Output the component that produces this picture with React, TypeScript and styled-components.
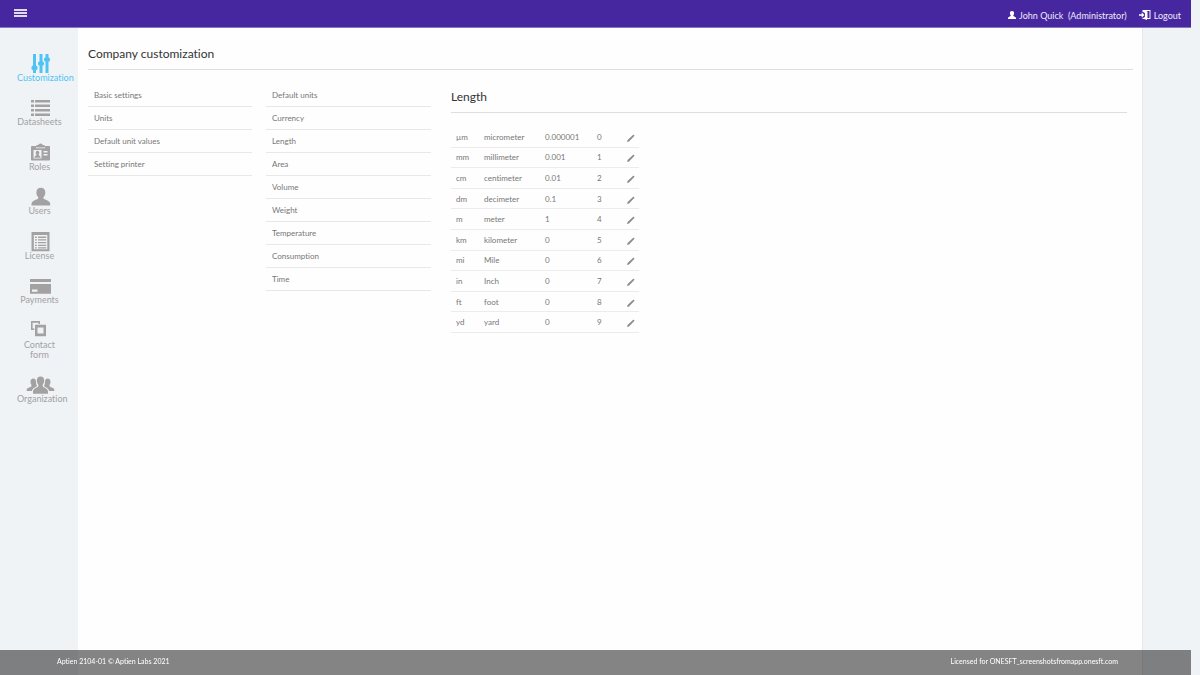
import React from 'react';
import styled, { createGlobalStyle } from 'styled-components';

const GlobalStyle = createGlobalStyle`
  *, *::before, *::after { box-sizing: border-box; }
  body {
    margin: 0;
    background: #eff3f6;
    color: #777;
    font-family: Lato, "Liberation Sans", sans-serif;
    font-size: 8px;
    font-variant-ligatures: none;
  }
  a { color: inherit; text-decoration: none; }
  button { border: 0; padding: 0; background: none; color: inherit; font: inherit; cursor: pointer; }
  ul { list-style: none; margin: 0; padding: 0; }
  svg { display: block; flex: none; }
`;

const Page = styled.div`
  min-height: 100vh;
  padding-right: 9px;
  display: flex;
  flex-direction: column;
`;

const TopBar = styled.header`
  height: 28px;
  padding: 0 10px 0 14px;
  display: flex;
  justify-content: space-between;
  background: #4727a0;
  border-bottom: 1px solid #8b76c4;
  color: #efebf8;
  font-size: 9px;
`;

const MenuButton = styled.button`
  height: 26px;
  display: flex;
  align-items: center;
`;

const Account = styled.div`
  padding-top: 3px;
  display: flex;
  align-items: center;
  gap: 12px;
`;

const AccountLink = styled.a`
  display: flex;
  align-items: center;
  gap: 3px;
  white-space: pre;
`;

const Body = styled.div`
  flex: 1;
  display: flex;
`;

const Sidebar = styled.nav`
  flex: none;
  width: 78px;
  padding: 26px 0 0 17px;
`;

const NavList = styled.ul`
  height: 350px;
  display: flex;
  flex-direction: column;
  justify-content: space-between;
`;

const NavLink = styled.a<{ $active?: boolean }>`
  width: 45px;
  display: block;
  color: ${p => (p.$active ? '#4fc3f4' : '#a3a1a1')};
  font-size: 9px;
  line-height: 10px;
  text-align: center;
  svg { margin-left: 9px; }
`;

const Main = styled.main`
  flex: 1;
  min-width: 0;
  margin-right: 48px;
  padding: 14px 9px 40px 10px;
  background: #fefefe;
  border-right: 1px solid #e6e9ec;
`;

const PageTitle = styled.h1`
  height: 28px;
  margin: 0;
  border-bottom: 1px solid #dedede;
  color: #333;
  font-size: 12px;
  line-height: 24px;
  font-weight: 400;
`;

const Columns = styled.div`
  padding-top: 14px;
  display: grid;
  grid-template-columns: 164px 165px minmax(0, 1fr);
  gap: 14px;
  align-items: start;
`;

const OptionLink = styled.a`
  height: 23px;
  padding: 0 6px;
  display: block;
  border-bottom: 1px solid #e8e8e8;
  line-height: 22px;
`;

const Panel = styled.section`
  padding: 0 6px;
`;

const PanelTitle = styled.h2`
  height: 29px;
  margin: 0 0 14px;
  border-bottom: 1px solid #dedede;
  color: #333;
  font-size: 12px;
  line-height: 26px;
  font-weight: 400;
`;

const UnitTable = styled.table`
  width: 188px;
  height: 206px;
  border-collapse: separate;
  border-spacing: 0;
  table-layout: fixed;
`;

const Cell = styled.td`
  padding: 0 5px;
  border-bottom: 1px solid #ececec;
  line-height: 12px;
  vertical-align: middle;
  white-space: nowrap;
`;

const EditButton = styled.button`
  display: block;
  margin: 2px 0 0 10px;
`;

const Footer = styled.footer`
  position: fixed;
  left: 0;
  right: 9px;
  bottom: 0;
  height: 25px;
  padding: 0 73px 3px 57px;
  display: flex;
  align-items: center;
  justify-content: space-between;
  background: rgba(0, 0, 0, 0.48);
  color: #fff;
  font-size: 7px;
`;

const icons = {
  sliders: (
    <>
      <path d="M7 0h3v19H7zM13.500 0h3v19h-3zM19.500 0h3v19h-3z" />
      <rect x="5.500" y="11.500" width="6" height="4.500" rx="1.500" />
      <rect x="12" y="7.500" width="6" height="4" rx="1.500" />
      <rect x="18" y="3.500" width="6" height="4" rx="1.500" />
    </>
  ),
  list: (
    <path d="M5 2h3v2.500H5zM9 2h15v2.500H9zM5 6.500h3v2.500H5zM9 6.500h15v2.500H9zM5 11h3v2.500H5zM9 11h15v2.500H9zM5 15.500h3V18H5zM9 15.500h15V18H9z" />
  ),
  badge: (
    <path
      fillRule="evenodd"
      d="M6 3h4.500V2.100h1.700a2.400 2.400 0 0 1 4.600 0h1.700V3H23a1 1 0 0 1 1 1v12.500a1 1 0 0 1-1 1H6a1 1 0 0 1-1-1V4a1 1 0 0 1 1-1zM10 4.300v1h9v-1h-1v.2h-7v-.2zM7.500 7v8.500h8V7zM17.500 8v1.500h4V8zM17.500 11v1.500h4V11zM11.500 7.700a1.800 2 0 0 1 1.200 3.500v1c.3.500 1.800.6 1.800 2v.6h-6v-.6c0-1.400 1.500-1.500 1.800-2v-1a1.800 2 0 0 1 1.200-3.500z"
    />
  ),
  user: (
    <path d="M14.800.8c2.900 0 4.500 1.800 4.500 4.700 0 2-.7 3.500-1.800 4.600v1.400c.4 1.200 6.700 2 6.700 5.300v1.700H5.500v-1.700c0-3.300 6.300-4.100 6.700-5.300v-1.400c-1.100-1.100-1.800-2.600-1.800-4.600 0-2.900 1.600-4.700 4.400-4.700z" />
  ),
  license: (
    <path
      fillRule="evenodd"
      d="M5.500 0h18v19.300h-18zM7.800 3v14.300h13.500V3zM9 4.600h1.800v1.300H9zM12 4.600h8.200v1.300H12zM9 7.300h1.800v1.300H9zM12 7.300h8.200v1.300H12zM9 10h1.800v1.300H9zM12 10h8.200v1.300H12zM9 12.700h1.800V14H9zM12 12.700h8.200V14H12zM9 15.200h1.800v1.200H9zM12 15.200h8.200v1.200H12z"
    />
  ),
  card: <path fillRule="evenodd" d="M4 3h21v3H4zM4 8h21v9.700H4zM6 13.500v2.300h5.500v-2.300z" />,
  copy: (
    <path
      fillRule="evenodd"
      d="M5 0h9v3h-1.500V1.700H6.600v5.700h1.700V9H5zM9 3.700h11v11.500H9zM11.500 6.400v6.100h6V6.400z"
    />
  ),
  group: (
    <>
      <path d="M14.500 1.500c2.300 0 3.700 1.600 3.700 4.100 0 1.800-.6 3.100-1.500 4v1.700c.5 1.300 5.300 1.900 5.300 5.500v2H7v-2c0-3.600 4.800-4.200 5.300-5.500V9.600c-.9-.9-1.500-2.200-1.500-4 0-2.500 1.400-4.100 3.700-4.100z" />
      <path d="M7.300 3.500c1.300 0 2.300.8 2.600 2.400.2 1.800.2 3.800 1.200 4.800-.8 1.700-4.600 2-5.300 5.300H.7v-1.300c0-2.200 4.200-2.300 4.700-3.500V9.800c-.6-.7-.9-1.700-.9-2.800 0-2.300 1-3.500 2.800-3.500z" />
      <path d="M21.700 3.500c-1.300 0-2.300.8-2.600 2.400-.2 1.800-.2 3.800-1.200 4.800.8 1.700 4.600 2 5.300 5.300h5.100v-1.300c0-2.200-4.200-2.300-4.700-3.500V9.800c.6-.7.9-1.700.9-2.800 0-2.300-1-3.500-2.800-3.500z" />
    </>
  ),
};

type IconName = keyof typeof icons;

const navItems: { label: string; icon: IconName; active?: boolean }[] = [
  { label: 'Customization', icon: 'sliders', active: true },
  { label: 'Datasheets', icon: 'list' },
  { label: 'Roles', icon: 'badge' },
  { label: 'Users', icon: 'user' },
  { label: 'License', icon: 'license' },
  { label: 'Payments', icon: 'card' },
  { label: 'Contact form', icon: 'copy' },
  { label: 'Organization', icon: 'group' },
];

const settings = ['Basic settings', 'Units', 'Default unit values', 'Setting printer'];

const unitKinds = [
  'Default units', 'Currency', 'Length', 'Area', 'Volume',
  'Weight', 'Temperature', 'Consumption', 'Time',
];

const units = [
  ['µm', 'micrometer', '0.000001'],
  ['mm', 'millimeter', '0.001'],
  ['cm', 'centimeter', '0.01'],
  ['dm', 'decimeter', '0.1'],
  ['m', 'meter', '1'],
  ['km', 'kilometer', '0'],
  ['mi', 'Mile', '0'],
  ['in', 'Inch', '0'],
  ['ft', 'foot', '0'],
  ['yd', 'yard', '0'],
];

function OptionList({ items }: { items: string[] }) {
  return (
    <ul>
      {items.map(item => (
        <li key={item}><OptionLink href="#">{item}</OptionLink></li>
      ))}
    </ul>
  );
}

export default function App() {
  return (
    <Page>
      <GlobalStyle />
      <TopBar>
        <MenuButton type="button" aria-label="Menu">
          <svg width="13" height="8" viewBox="0 0 13 8" fill="#e0daf0">
            <path d="M0 0h13v2H0zM0 3h13v2H0zM0 6h13v2H0z" />
          </svg>
        </MenuButton>
        <Account>
          <AccountLink href="#">
            <svg width="8" height="8" viewBox="0 0 8 8" fill="#fff">
              <path d="M4 0c1.400 0 2.100.9 2.100 2.200 0 .9-.4 1.600-.8 2v.9C5.500 5.600 8 5.600 8 7.200V8H0v-.8c0-1.600 2.500-1.600 2.700-2.100v-.9c-.4-.4-.8-1.100-.8-2C1.900.9 2.600 0 4 0z" />
            </svg>
            {'John Quick  (Administrator)'}
          </AccountLink>
          <AccountLink href="#">
            <svg width="12" height="10" viewBox="0 0 12 10" fill="#fff">
              <path d="M0 4.200h2.700V2.500L5.500 5 2.700 7.500V5.800H0z" />
              <path fillRule="evenodd" d="M3.500 0H11.500v9H8v1L5 9H3.500V7.700H5l1-1.200V3.500l-1-1.200H3.500zM7 1l1.500.5V8h2V1z" />
            </svg>
            Logout
          </AccountLink>
        </Account>
      </TopBar>
      <Body>
        <Sidebar>
          <NavList>
            {navItems.map(({ label, icon, active }) => (
              <li key={label}>
                <NavLink href="#" $active={active}>
                  <svg width="29" height="19" viewBox="0 0 29 19" overflow="visible" fill="currentColor">
                    {icons[icon]}
                  </svg>
                  {label}
                </NavLink>
              </li>
            ))}
          </NavList>
        </Sidebar>
        <Main>
          <PageTitle>Company customization</PageTitle>
          <Columns>
            <OptionList items={settings} />
            <OptionList items={unitKinds} />
            <Panel>
              <PanelTitle>Length</PanelTitle>
              <UnitTable>
                <colgroup>
                  <col width="28" />
                  <col width="61" />
                  <col width="52" />
                  <col width="20" />
                  <col width="27" />
                </colgroup>
                <tbody>
                  {units.map(([symbol, name, ratio], order) => (
                    <tr key={symbol}>
                      <Cell>{symbol}</Cell>
                      <Cell>{name}</Cell>
                      <Cell>{ratio}</Cell>
                      <Cell>{order}</Cell>
                      <Cell>
                        <EditButton type="button" aria-label={`Edit ${name}`}>
                          <svg width="8" height="8" viewBox="0 0 8 8" fill="#8c8c8c">
                            <path d="M0 8l.6-2L6.200.8c.6-.6 1.700.5 1.100 1.100L2 7.400z" />
                          </svg>
                        </EditButton>
                      </Cell>
                    </tr>
                  ))}
                </tbody>
              </UnitTable>
            </Panel>
          </Columns>
        </Main>
      </Body>
      <Footer>
        <span>Aptien 2104-01 © Aptien Labs 2021</span>
        <span>Licensed for ONESFT_screenshotsfromapp.onesft.com</span>
      </Footer>
    </Page>
  );
}
